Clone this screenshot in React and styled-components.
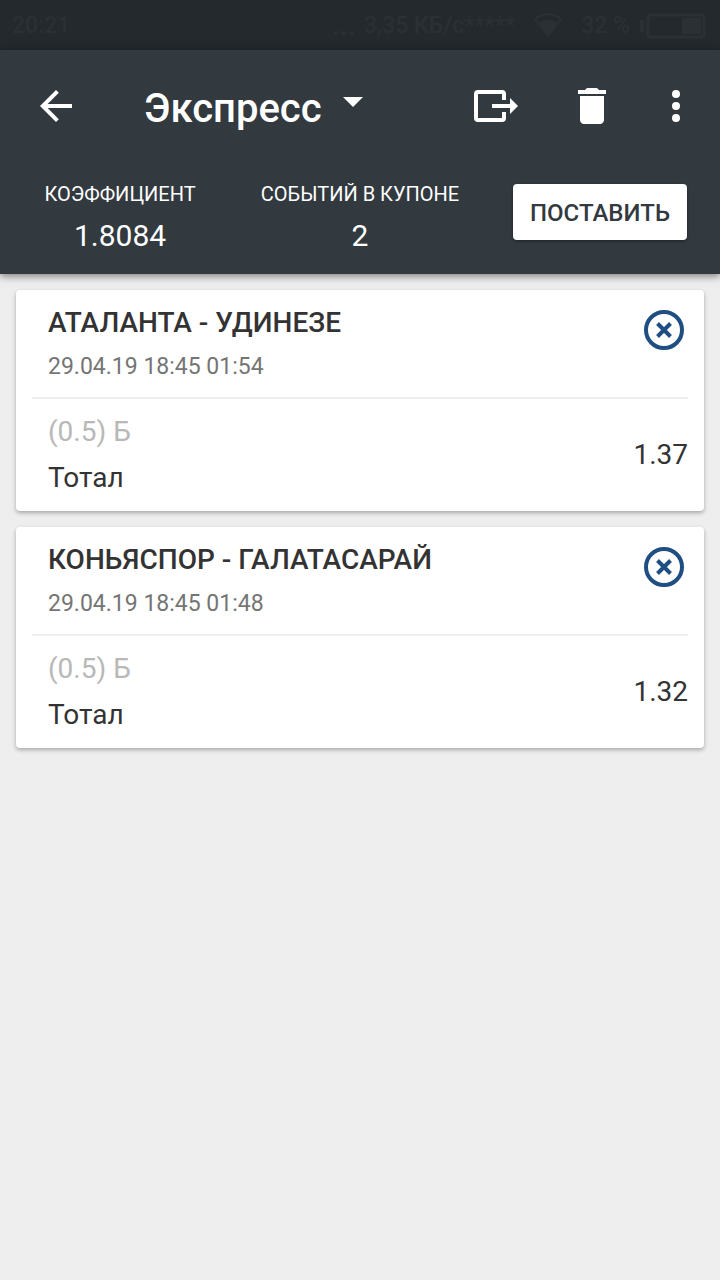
import { useState } from 'react';
import styled, { createGlobalStyle } from 'styled-components';

const GlobalStyle = createGlobalStyle`
  * {
    box-sizing: border-box;
  }

  body {
    margin: 0;
    background-color: #eeeeee;
    font-family: Roboto, 'Liberation Sans', sans-serif;
  }

  button,
  select {
    font-family: inherit;
    border: none;
    padding: 0;
    cursor: pointer;
  }

  svg {
    display: block;
  }
`;

const Page = styled.div`
  min-height: 100vh;
`;

const StatusBar = styled.div`
  display: flex;
  align-items: center;
  justify-content: space-between;
  height: 50px;
  padding: 2px 14px 0 12px;
  background-color: #24292d;
  color: #2b3034;
  font-size: 23px;
  font-weight: 500;
  line-height: 28px;
`;

const StatusGroup = styled.div`
  display: flex;
  align-items: center;
  gap: ${({ $gap }) => $gap}px;
`;

const ActivityDots = styled.span`
  font-size: 28px;
  font-weight: 700;
`;

const Header = styled.header`
  position: relative;
  background-color: #32393f;
  color: #ffffff;
  box-shadow: 0 2px 8px rgba(0, 0, 0, 0.5);
`;

const Toolbar = styled.div`
  display: flex;
  align-items: center;
  height: 112px;
  padding: 0 20px 0 32px;
`;

const IconButton = styled.button`
  display: flex;
  align-items: center;
  justify-content: center;
  background: transparent;
  color: inherit;
`;

const TypePicker = styled.label`
  position: relative;
  display: flex;
  margin-left: 64px;
  padding-top: 6px;
`;

const TypeSelect = styled.select`
  appearance: none;
  background: transparent;
  color: inherit;
  font-size: 40px;
  font-weight: 500;
  line-height: 48px;

  && {
    padding-right: 41px;
  }
`;

const Caret = styled.svg`
  position: absolute;
  right: 0;
  top: 18px;
  pointer-events: none;
`;

const Actions = styled.div`
  display: flex;
  gap: 48px;
  margin-left: auto;
`;

const MoreButton = styled(IconButton)`
  margin-left: -12px;
`;

const Summary = styled.div`
  display: grid;
  grid-template-columns: repeat(3, 1fr);
  align-items: center;
  justify-items: center;
  height: 112px;
  padding-bottom: 12px;
`;

const Stat = styled.div`
  display: flex;
  flex-direction: column;
  align-items: center;
  gap: 12px;
  padding-top: 12px;
`;

const StatLabel = styled.span`
  font-size: 20px;
  line-height: 24px;
  text-transform: uppercase;
  white-space: nowrap;
`;

const StatValue = styled.span`
  font-size: 30px;
  line-height: 36px;
`;

const PlaceButton = styled.button`
  height: 56px;
  background-color: #ffffff;
  color: #32393f;
  border-radius: 4px;
  font-size: 24px;
  font-weight: 500;
  text-transform: uppercase;
  box-shadow: 0 1px 3px rgba(0, 0, 0, 0.4);

  && {
    padding: 2px 17px 0;
  }
`;

const EventList = styled.main`
  display: flex;
  flex-direction: column;
  gap: 16px;
  padding: 16px;
`;

const Card = styled.article`
  background-color: #ffffff;
  border-radius: 4px;
  box-shadow: 0 2px 4px rgba(0, 0, 0, 0.3);
`;

const CardHead = styled.div`
  display: flex;
  align-items: flex-start;
  justify-content: space-between;
  margin: 0 16px;
  padding: 16px 4px 16px 16px;
  border-bottom: 2px solid #eeeeee;
`;

const Teams = styled.h2`
  margin: 0 0 12px;
  color: #333333;
  font-size: 28px;
  font-weight: 500;
  line-height: 34px;
  text-transform: uppercase;
`;

const EventDate = styled.time`
  display: block;
  color: #757575;
  font-size: 23px;
  line-height: 29px;
`;

const RemoveButton = styled(IconButton)`
  color: #1f4e82;
  margin-top: 4px;
`;

const CardBody = styled.div`
  display: flex;
  align-items: center;
  justify-content: space-between;
  padding: 16px 16px 16px 32px;
  color: #333333;
  font-size: 28px;
  line-height: 34px;
`;

const Outcome = styled.p`
  margin: 0 0 12px;
  color: #b8b8b8;
`;

const Market = styled.p`
  margin: 0;
`;

const Odds = styled.span`
  text-align: right;
`;

const initialEvents = [
  {
    id: 1,
    teams: 'Аталанта - Удинезе',
    date: '29.04.19 18:45 01:54',
    outcome: '(0.5) Б',
    market: 'Тотал',
    odds: '1.37',
  },
  {
    id: 2,
    teams: 'Коньяспор - Галатасарай',
    date: '29.04.19 18:45 01:48',
    outcome: '(0.5) Б',
    market: 'Тотал',
    odds: '1.32',
  },
];

const WifiIcon = () => (
  <svg width="30" height="26" viewBox="0 0 30 26" fill="none">
    <path d="M2 6a20 20 0 0 1 26 0L15 23z" stroke="currentColor" strokeWidth="2" />
    <path d="M6 10a14 14 0 0 1 18 0l-9 13z" fill="currentColor" />
  </svg>
);

const BatteryIcon = () => (
  <svg width="66" height="26" viewBox="0 0 66 26">
    <path d="M0 7h4v12H0z" fill="currentColor" />
    <rect x="8" y="2" width="56" height="22" rx="2" fill="none" stroke="currentColor" strokeWidth="3" />
    <path d="M42 5h19v16H42z" fill="currentColor" />
  </svg>
);

const BackIcon = () => (
  <svg width="48" height="48" viewBox="0 0 24 24" fill="currentColor">
    <path d="M20 11H7.83l5.59-5.59L12 4l-8 8 8 8 1.41-1.41L7.83 13H20v-2z" />
  </svg>
);

const ExitIcon = () => (
  <svg width="48" height="48" viewBox="0 0 48 48">
    <path
      d="M32 18v-6q0-2-2-2H6q-2 0-2 2v24q0 2 2 2h24q2 0 2-2v-6"
      fill="none"
      stroke="currentColor"
      strokeWidth="4"
    />
    <path d="M20 22h18v-6l8 8-8 8v-6H20z" fill="currentColor" />
  </svg>
);

const TrashIcon = () => (
  <svg width="48" height="48" viewBox="0 0 24 24" fill="currentColor">
    <path d="M6 19c0 1.100.9 2 2 2h8c1.100 0 2-.9 2-2V7H6v12zM19 4h-3.500l-1-1h-5l-1 1H5v2h14V4z" />
  </svg>
);

const MoreIcon = () => (
  <svg width="48" height="48" viewBox="0 0 24 24" fill="currentColor">
    <circle cx="12" cy="6" r="2" />
    <circle cx="12" cy="12" r="2" />
    <circle cx="12" cy="18" r="2" />
  </svg>
);

const RemoveIcon = () => (
  <svg width="40" height="40" viewBox="0 0 40 40" fill="none" stroke="currentColor" strokeWidth="4">
    <circle cx="20" cy="20" r="18" />
    <path d="M13.500 13.500l13 13M26.500 13.500l-13 13" />
  </svg>
);

const EventCard = ({ event, onRemove }) => {
  return (
    <Card>
      <CardHead>
        <div>
          <Teams>{event.teams}</Teams>
          <EventDate>{event.date}</EventDate>
        </div>
        <RemoveButton type="button" aria-label="Удалить событие" onClick={onRemove}>
          <RemoveIcon />
        </RemoveButton>
      </CardHead>
      <CardBody>
        <div>
          <Outcome>{event.outcome}</Outcome>
          <Market>{event.market}</Market>
        </div>
        <Odds>{event.odds}</Odds>
      </CardBody>
    </Card>
  );
};

const App = () => {
  const [events, setEvents] = useState(initialEvents);

  const removeEvent = (id) => {
    setEvents(events.filter((event) => event.id !== id));
  };

  return (
    <Page>
      <GlobalStyle />
      <StatusBar>
        <span>20:21</span>
        <StatusGroup $gap={18}>
          <StatusGroup $gap={8}>
            <ActivityDots>...</ActivityDots>
            <span>3,35 КБ/с*****</span>
          </StatusGroup>
          <WifiIcon />
          <StatusGroup $gap={10}>
            <span>32 %</span>
            <BatteryIcon />
          </StatusGroup>
        </StatusGroup>
      </StatusBar>
      <Header>
        <Toolbar>
          <IconButton type="button" aria-label="Назад">
            <BackIcon />
          </IconButton>
          <TypePicker>
            <TypeSelect aria-label="Тип ставки">
              <option>Экспресс</option>
            </TypeSelect>
            <Caret width="20" height="10" viewBox="0 0 20 10">
              <path d="M0 0h20L10 10z" fill="currentColor" />
            </Caret>
          </TypePicker>
          <Actions>
            <IconButton type="button" aria-label="Переместить">
              <ExitIcon />
            </IconButton>
            <IconButton type="button" aria-label="Очистить купон" onClick={() => setEvents([])}>
              <TrashIcon />
            </IconButton>
            <MoreButton type="button" aria-label="Ещё">
              <MoreIcon />
            </MoreButton>
          </Actions>
        </Toolbar>
        <Summary>
          <Stat>
            <StatLabel>Коэффициент</StatLabel>
            <StatValue>1.8084</StatValue>
          </Stat>
          <Stat>
            <StatLabel>Событий в купоне</StatLabel>
            <StatValue>{events.length}</StatValue>
          </Stat>
          <PlaceButton type="button">Поставить</PlaceButton>
        </Summary>
      </Header>
      <EventList>
        {events.map((event) => (
          <EventCard key={event.id} event={event} onRemove={() => removeEvent(event.id)} />
        ))}
      </EventList>
    </Page>
  );
};

export default App;
